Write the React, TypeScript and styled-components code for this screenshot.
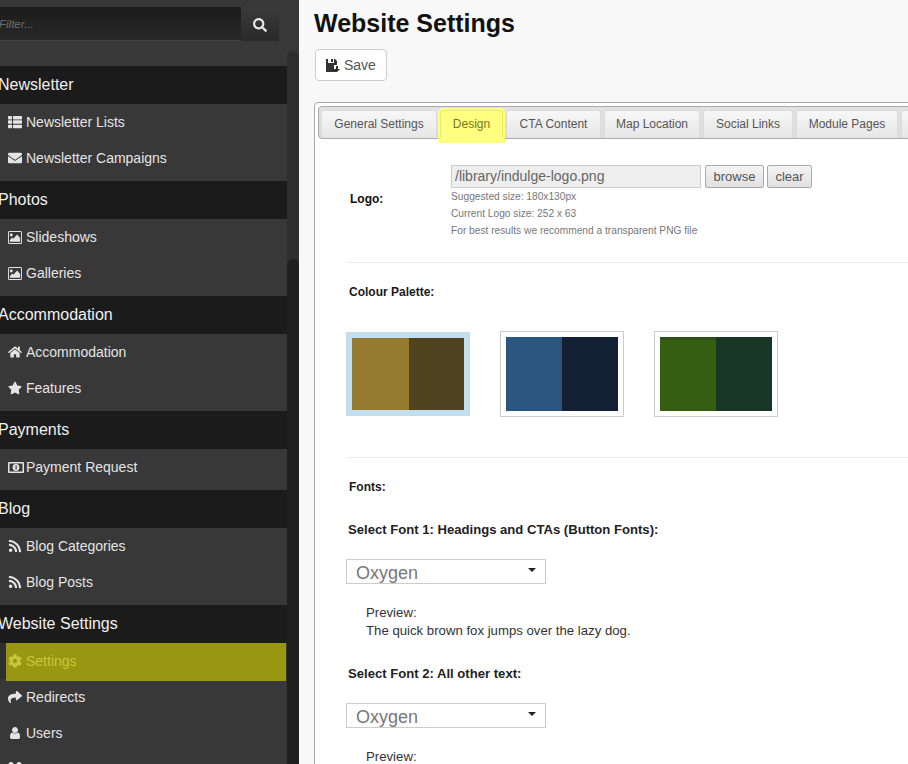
import { ReactNode } from "react";
import styled, { createGlobalStyle } from "styled-components";
import { FaCog, FaEnvelope, FaHome, FaRss, FaSearch, FaShare, FaStar, FaThList } from "react-icons/fa";

const GlobalStyle = createGlobalStyle`
  html, body {
    margin: 0;
    height: 100%;
    overflow: hidden;
    background: #f8f8f8;
    font-family: "Liberation Sans", Arial, sans-serif;
  }
`;

const Page = styled.div`
  display: flex;
  width: 908px;
  height: 764px;
  overflow: hidden;
`;

const Sidebar = styled.aside`
  flex: none;
  display: flex;
  width: 299px;
  height: 764px;
  overflow: hidden;
  background: #383838;
`;

const SidebarBody = styled.div`
  flex: none;
  width: 287px;
`;

const Track = styled.div`
  flex: none;
  width: 12px;
  margin-top: 51px;
  border-radius: 6px 6px 0 0;
  background: #2e2e2e;
  display: flex;
  flex-direction: column;
  justify-content: flex-end;
`;

const Thumb = styled.div`
  height: 505px;
  border-radius: 6px 6px 0 0;
  background: #1f1f1f;
`;

const FilterRow = styled.div`
  display: flex;
  width: 279px;
  height: 34px;
  margin: 7px 0 25px;
`;

const FilterInput = styled.div`
  flex: 1;
  background: linear-gradient(#1c1c1c, #272727);
  border-bottom: 1px solid #444;
  box-sizing: border-box;
  color: #6e6e6e;
  font-size: 11.5px;
  font-style: italic;
  line-height: 35px;
  text-indent: -1px;
`;

const FilterButton = styled.div`
  flex: none;
  width: 38px;
  height: 33px;
  margin-top: 1px;
  display: flex;
  align-items: center;
  justify-content: center;
  color: #e6e6e6;
  font-size: 14px;
  background: linear-gradient(#3a3a3a, #292929);
`;

const GroupTitle = styled.div`
  height: 38px;
  background: #1b1b1b;
  color: #f0f0f0;
  font-size: 16px;
  line-height: 38px;
  text-indent: -2px;
  overflow: hidden;
`;

const GroupItems = styled.div`
  padding-bottom: 5px;
`;

const Item = styled.div<{ $active?: boolean }>`
  position: relative;
  display: flex;
  align-items: center;
  box-sizing: border-box;
  height: ${(p) => (p.$active ? "38px" : "36px")};
  margin: ${(p) => (p.$active ? "0 1px -2px 6px" : "0")};
  padding-left: ${(p) => (p.$active ? "2px" : "8px")};
  padding-bottom: ${(p) => (p.$active ? "2px" : "0")};
  background: ${(p) => (p.$active ? "#999612" : "transparent")};
  color: ${(p) => (p.$active ? "#c9c736" : "#e4e4e4")};
  font-size: 14px;

  &::before {
    content: "";
    display: ${(p) => (p.$active ? "block" : "none")};
    position: absolute;
    top: 0;
    left: -6px;
    width: 6px;
    height: 36px;
    background: #2f2f2f;
  }
`;

const ItemIcon = styled.span`
  flex: none;
  width: 18px;
  display: flex;
  align-items: center;
  justify-content: flex-start;
  font-size: 14px;
`;

const Main = styled.main`
  flex: 1;
  min-width: 0;
  padding-left: 15px;
`;

const Title = styled.h1`
  margin: 0;
  padding-top: 8px;
  color: #111;
  font-size: 25px;
  font-weight: 700;
  line-height: 30px;
`;

const SaveButton = styled.button`
  display: flex;
  align-items: center;
  gap: 4px;
  width: 72px;
  height: 32px;
  margin: 11px 0 21px 1px;
  padding: 0 0 0 10px;
  background: #fff;
  border: 1px solid #ccc;
  border-radius: 4px;
  color: #555;
  font: 14px "Liberation Sans", Arial, sans-serif;
`;

const Panel = styled.section`
  width: 640px;
  height: 700px;
  box-sizing: border-box;
  padding: 3px 0 0 3px;
  background: #fff;
  border: 1px solid #aaa;
  border-radius: 4px 0 0 0;
`;

const TabBar = styled.div`
  display: flex;
  gap: 3px;
  height: 33px;
  box-sizing: border-box;
  padding: 3px 0 0 2px;
  background: linear-gradient(#e2e2e2, #dcdcdc);
  border: 1px solid #aaa;
  border-radius: 4px 0 0 4px;
`;

const Tab = styled.div<{ $active?: boolean; $width: number }>`
  position: relative;
  flex: none;
  width: ${(p) => p.$width}px;
  height: 28px;
  box-sizing: border-box;
  text-align: center;
  color: ${(p) => (p.$active ? "#77771a" : "#555")};
  font-size: 12px;
  line-height: 26px;
  background: ${(p) => (p.$active ? "#ffff80" : "linear-gradient(#f7f7f7, #e6e6e6)")};
  border: 1px solid ${(p) => (p.$active ? "#e8e86c" : "#dcdcdc")};
  border-bottom: none;
  border-radius: 3px 3px 0 0;
  box-shadow: ${(p) => (p.$active ? "0 0 0 2px #ffff80, 0 3px 0 2px #ffff80" : "none")};
`;

const Content = styled.div`
  padding-left: 28px;
  color: #222;
`;

const LogoRow = styled.div`
  display: flex;
  align-items: flex-start;
  height: 97px;
  padding-top: 26px;
  border-bottom: 1px solid #eee;
`;

const FieldLabel = styled.div`
  flex: none;
  width: 105px;
  margin-top: 27px;
  padding-left: 4px;
  box-sizing: border-box;
  font-size: 12px;
  font-weight: 700;
  color: #111;
`;

const LogoField = styled.div`
  display: flex;
  flex-direction: column;
`;

const InputRow = styled.div`
  display: flex;
  gap: 3px;
`;

const PathInput = styled.div`
  width: 250px;
  height: 23px;
  box-sizing: border-box;
  border: 1px solid #ccc;
  background: #eee;
  color: #666;
  font-size: 14px;
  line-height: 21px;
  padding-left: 3px;
  margin-right: 1px;
`;

const SmallButton = styled.button<{ $width: number }>`
  width: ${(p) => p.$width}px;
  height: 23px;
  padding: 0;
  box-sizing: border-box;
  background: linear-gradient(#f4f4f4, #e0e0e0);
  border: 1px solid #aaa;
  border-radius: 2px;
  color: #555;
  font: 13px "Liberation Sans", Arial, sans-serif;
`;

const Hint = styled.div`
  color: #777;
  font-size: 10.2px;
  line-height: 17px;
`;

const PaletteSection = styled.div`
  height: 194px;
  border-bottom: 1px solid #eee;
`;

const SectionLabel = styled.div`
  padding: 21px 0 0 3px;
  font-size: 12px;
  font-weight: 700;
  color: #1a1a1a;
  line-height: 16px;
`;

const Swatches = styled.div`
  display: flex;
  gap: 30px;
  margin-top: 31px;
`;

const Swatch = styled.div<{ $selected?: boolean }>`
  display: flex;
  flex: none;
  width: 124px;
  height: ${(p) => (p.$selected ? "84px" : "86px")};
  margin-top: ${(p) => (p.$selected ? "1px" : "0")};
  box-sizing: border-box;
  padding: 5px;
  border: 1px solid ${(p) => (p.$selected ? "#c8dbe6" : "#ccc")};
  background: ${(p) => (p.$selected ? "#c2dfef" : "#fff")};
`;

const SwatchColor = styled.div<{ $color: string; $width: number; $shade?: string }>`
  flex: none;
  width: ${(p) => p.$width}px;
  background: ${(p) => p.$color};
  box-shadow: ${(p) => p.$shade ?? "none"};
`;

const FontLabel = styled.div<{ $top: number }>`
  margin-top: ${(p) => p.$top}px;
  padding-left: 2px;
  font-size: 13.1px;
  font-weight: 700;
  color: #222;
  line-height: 18px;
`;

const FontSelect = styled.div`
  position: relative;
  width: 200px;
  height: 25px;
  box-sizing: border-box;
  margin-top: 20px;
  padding-left: 9px;
  border: 1px solid #ccc;
  color: #777;
  font-size: 18px;
  line-height: 26px;
  overflow: hidden;
`;

const Caret = styled.span`
  position: absolute;
  top: 8px;
  right: 9px;
  border-left: 4px solid transparent;
  border-right: 4px solid transparent;
  border-top: 4px solid #222;
`;

const Preview = styled.div`
  padding: 20px 0 0 20px;
  font-size: 13.2px;
  line-height: 18px;
  color: #333;
`;

const PictureIcon = () => (
  <svg width="14" height="13" viewBox="0 128 1920 1536" preserveAspectRatio="none" fill="currentColor">
    <path d="M640 576q0 80-56 136t-136 56-136-56-56-136 56-136 136-56 136 56 56 136zm1024 384v448h-1408v-192l320-320 160 160 512-512zm96-704h-1600q-13 0-22.5 9.5t-9.5 22.5v1216q0 13 9.5 22.5t22.5 9.5h1600q13 0 22.5-9.5t9.5-22.5v-1216q0-13-9.5-22.5t-22.5-9.5zm160 32v1216q0 66-47 113t-113 47h-1600q-66 0-113-47t-47-113v-1216q0-66 47-113t113-47h1600q66 0 113 47t47 113z" />
  </svg>
);

const MoneyIcon = () => (
  <svg width="16" height="11" viewBox="0 0 16 11">
    <rect width="16" height="11" rx="1" fill="currentColor" />
    <rect x="1.5" y="1.5" width="13" height="8" fill="#383838" />
    <circle cx="8" cy="5.5" r="3.4" fill="currentColor" />
    <rect x="7.5" y="3.5" width="1.2" height="4" fill="#383838" />
  </svg>
);

const UserIcon = () => (
  <svg width="14" height="14" viewBox="0 0 1792 1792" fill="currentColor">
    <path d="M1536 1399q0 109-62.5 187t-150.5 78h-854q-88 0-150.5-78t-62.5-187q0-85 8.5-160.5t31.5-151.5 58.5-130 94-88.5 134.5-34.5q131 128 313 128t313-128q76 0 134.5 34.5t94 88.5 58.5 130 31.5 151.5 8.5 160.5zm-256-887q0 159-112.5 271.5t-271.5 112.5-271.5-112.5-112.5-271.5 112.5-271.5 271.5-112.5 271.5 112.5 112.5 271.5z" />
  </svg>
);

const PairIcon = () => (
  <svg width="14" height="14" viewBox="0 0 14 14" fill="currentColor">
    <circle cx="3" cy="2.6" r="2.6" />
    <circle cx="11" cy="2.6" r="2.6" />
    <path d="M0 12V7.5Q0 6 1.5 6h3Q6 6 6 7.5V12zM8 12V7.5Q8 6 9.5 6h3Q14 6 14 7.5V12z" />
  </svg>
);

const SaveIcon = () => (
  <svg width="14" height="13" viewBox="0 0 14 13" fill="#333">
    <path d="M0 0h2v4h6V0h1l2 2v4H8v4h1.2L11 12v1H0z" />
    <path d="M5 0h2v3H5zM10 7h2v3h2l-3 3-3-3h2z" />
  </svg>
);

const groups: { title: string; items: { icon: ReactNode; label: string; active?: boolean }[] }[] = [
  {
    title: "Newsletter",
    items: [
      { icon: <FaThList />, label: "Newsletter Lists" },
      { icon: <FaEnvelope />, label: "Newsletter Campaigns" },
    ],
  },
  {
    title: "Photos",
    items: [
      { icon: <PictureIcon />, label: "Slideshows" },
      { icon: <PictureIcon />, label: "Galleries" },
    ],
  },
  {
    title: "Accommodation",
    items: [
      { icon: <FaHome />, label: "Accommodation" },
      { icon: <FaStar />, label: "Features" },
    ],
  },
  { title: "Payments", items: [{ icon: <MoneyIcon />, label: "Payment Request" }] },
  {
    title: "Blog",
    items: [
      { icon: <FaRss />, label: "Blog Categories" },
      { icon: <FaRss />, label: "Blog Posts" },
    ],
  },
  {
    title: "Website Settings",
    items: [
      { icon: <FaCog />, label: "Settings", active: true },
      { icon: <FaShare />, label: "Redirects" },
      { icon: <UserIcon />, label: "Users" },
      { icon: <PairIcon />, label: "" },
    ],
  },
];

const tabs = [
  { label: "General Settings", width: 116 },
  { label: "Design", width: 63, active: true },
  { label: "CTA Content", width: 95 },
  { label: "Map Location", width: 96 },
  { label: "Social Links", width: 90 },
  { label: "Module Pages", width: 102 },
  { label: "", width: 40 },
];

export default function App() {
  return (
    <Page>
      <GlobalStyle />
      <Sidebar>
        <SidebarBody>
          <FilterRow>
            <FilterInput>Filter...</FilterInput>
            <FilterButton>
              <FaSearch />
            </FilterButton>
          </FilterRow>
          {groups.map((group) => (
            <div key={group.title}>
              <GroupTitle>{group.title}</GroupTitle>
              <GroupItems>
                {group.items.map((item) => (
                  <Item key={item.label} $active={item.active}>
                    <ItemIcon>{item.icon}</ItemIcon>
                    {item.label}
                  </Item>
                ))}
              </GroupItems>
            </div>
          ))}
        </SidebarBody>
        <Track>
          <Thumb />
        </Track>
      </Sidebar>
      <Main>
        <Title>Website Settings</Title>
        <SaveButton>
          <SaveIcon />
          Save
        </SaveButton>
        <Panel>
          <TabBar>
            {tabs.map((tab) => (
              <Tab key={tab.width} $width={tab.width} $active={tab.active}>
                {tab.label}
              </Tab>
            ))}
          </TabBar>
          <Content>
            <LogoRow>
              <FieldLabel>Logo:</FieldLabel>
              <LogoField>
                <InputRow>
                  <PathInput>/library/indulge-logo.png</PathInput>
                  <SmallButton $width={59}>browse</SmallButton>
                  <SmallButton $width={45}>clear</SmallButton>
                </InputRow>
                <Hint>Suggested size: 180x130px</Hint>
                <Hint>Current Logo size: 252 x 63</Hint>
                <Hint>For best results we recommend a transparent PNG file</Hint>
              </LogoField>
            </LogoRow>
            <PaletteSection>
              <SectionLabel>Colour Palette:</SectionLabel>
              <Swatches>
                <Swatch $selected>
                  <SwatchColor $color="#967a2f" $width={57} />
                  <SwatchColor $color="#4f4320" $width={55} />
                </Swatch>
                <Swatch>
                  <SwatchColor $color="#2b567f" $width={56} $shade="inset -2px 0 0 #34507a" />
                  <SwatchColor $color="#142135" $width={56} />
                </Swatch>
                <Swatch>
                  <SwatchColor $color="#355e13" $width={56} $shade="inset 0 3px 0 #2f5218" />
                  <SwatchColor $color="#173625" $width={56} />
                </Swatch>
              </Swatches>
            </PaletteSection>
            <SectionLabel>Fonts:</SectionLabel>
            <FontLabel $top={26}>Select Font 1: Headings and CTAs (Button Fonts):</FontLabel>
            <FontSelect>
              Oxygen
              <Caret />
            </FontSelect>
            <Preview>
              Preview:
              <br />
              The quick brown fox jumps over the lazy dog.
            </Preview>
            <FontLabel $top={25}>Select Font 2: All other text:</FontLabel>
            <FontSelect>
              Oxygen
              <Caret />
            </FontSelect>
            <Preview>Preview:</Preview>
          </Content>
        </Panel>
      </Main>
    </Page>
  );
}
